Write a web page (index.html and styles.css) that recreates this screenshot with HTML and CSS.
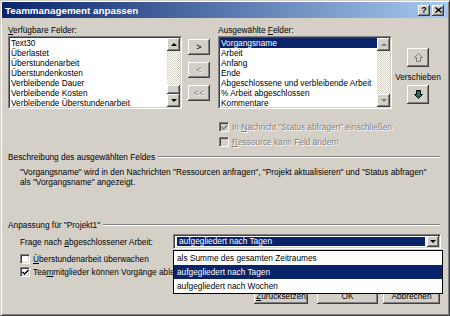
FILE: index.html
```html
<!DOCTYPE html>
<html lang="de">

<head>
  <meta charset="UTF-8">
  <title>Teammanagement anpassen</title>
  <link rel="stylesheet" href="styles.css">
</head>

<body>
  <div class="window">
    <div class="titlebar">
      <span class="title">Teammanagement anpassen</span>
      <div class="caption-buttons">
        <span class="cap-btn">?</span>
        <span class="cap-btn">
          <svg width="7" height="6" viewBox="0 0 7 6"><path d="M0.5 0.5 L6.5 5.5 M6.5 0.5 L0.5 5.5" stroke="#000" stroke-width="1.4"/></svg>
        </span>
      </div>
    </div>

    <div class="content">
      <div class="fields">
        <div class="field-col">
          <div class="label"><u>V</u>erfügbare Felder:</div>
          <div class="listbox">
            <div class="list-inner">
              <ul class="items">
                <li>Text30</li>
                <li>Überlastet</li>
                <li>Überstundenarbeit</li>
                <li>Überstundenkosten</li>
                <li>Verbleibende Dauer</li>
                <li>Verbleibende Kosten</li>
                <li>Verbleibende Überstundenarbeit</li>
              </ul>
              <div class="scrollbar">
                <span class="sb-btn"><span class="arrow up"></span></span>
                <span class="sb-track"></span>
                <span class="sb-thumb"></span>
                <span class="sb-btn"><span class="arrow down"></span></span>
              </div>
            </div>
          </div>
        </div>

        <div class="move-buttons">
          <button class="btn">&gt;</button>
          <button class="btn disabled">&lt;</button>
          <button class="btn disabled">&lt;&lt;</button>
        </div>

        <div class="field-col">
          <div class="label">Ausgewählte <u>F</u>elder:</div>
          <div class="listbox">
            <div class="list-inner">
              <ul class="items">
                <li class="selected">Vorgangsname</li>
                <li>Arbeit</li>
                <li>Anfang</li>
                <li>Ende</li>
                <li>Abgeschlossene und verbleibende Arbeit</li>
                <li>% Arbeit abgeschlossen</li>
                <li>Kommentare</li>
              </ul>
              <div class="scrollbar">
                <span class="sb-btn"><span class="arrow up off"></span></span>
                <span class="sb-track"></span>
                <span class="sb-btn"><span class="arrow down off"></span></span>
              </div>
            </div>
          </div>
          <div class="checks">
            <div class="check-row disabled">
              <span class="box checked">
                <svg width="7" height="7" viewBox="0 0 7 7"><path d="M0.5 3 L2.5 5 L6.5 1" stroke="#808080" stroke-width="1.5" fill="none"/></svg>
              </span>
              <span>In <u>N</u>achricht "Status abfragen" einschließen</span>
            </div>
            <div class="check-row disabled">
              <span class="box"></span>
              <span><u>R</u>essource kann Feld ändern</span>
            </div>
          </div>
        </div>

        <div class="order">
          <button class="btn tall">
            <svg width="9" height="9" viewBox="0 0 9 9"><path d="M4.5 0.5 L8.5 4.5 H6.5 V8.5 H2.5 V4.5 H0.5 Z" fill="none" stroke="#808080"/></svg>
          </button>
          <span class="order-label">Verschieben</span>
          <button class="btn tall">
            <svg width="9" height="9" viewBox="0 0 9 9"><path d="M2.5 0.5 H6.5 V4.5 H8.5 L4.5 8.5 L0.5 4.5 H2.5 Z" fill="#00806e" stroke="#000"/></svg>
          </button>
        </div>
      </div>

      <div class="group-title"><span>Beschreibung des ausgewählten Feldes</span></div>
      <p class="description">"Vorgangsname" wird in den Nachrichten "Ressourcen anfragen", "Projekt aktualisieren" und "Status abfragen"<br>als "Vorgangsname" angezeigt.</p>

      <div class="group-title second"><span>Anpassung für "Projekt1"</span></div>
      <div class="ask-row">
        <span class="ask-label">Frage nach <u>a</u>bgeschlossener Arbeit:</span>
        <div class="combo">
          <span class="combo-value">aufgegliedert nach Tagen</span>
          <span class="combo-btn"><span class="arrow down"></span></span>
        </div>
      </div>
      <div class="check-row option">
        <span class="box"></span>
        <span><u>Ü</u>berstundenarbeit überwachen</span>
      </div>
      <div class="check-row option next">
        <span class="box">
          <svg width="7" height="7" viewBox="0 0 7 7"><path d="M0.5 3 L2.5 5 L6.5 1" stroke="#000" stroke-width="1.5" fill="none"/></svg>
        </span>
        <span>Tea<u>m</u>mitglieder können Vorgänge ablehnen</span>
      </div>

      <div class="dialog-buttons">
        <button class="btn reset"><u>Z</u>urücksetzen</button>
        <button class="btn ok">OK</button>
        <button class="btn cancel">Abbrechen</button>
      </div>
    </div>

    <!-- open list of the combo box, drawn over the dialog -->
    <ul class="dropdown">
      <li>als Summe des gesamten Zeitraumes</li>
      <li class="selected">aufgegliedert nach Tagen</li>
      <li>aufgegliedert nach Wochen</li>
    </ul>
  </div>
</body>

</html>
```

FILE: styles.css
```css
body {
  margin: 0;
  font-family: "Liberation Sans", Arial, sans-serif;
  font-size: 8.3px;
  color: #000;
}

.window {
  position: relative;
  width: 450px;
  height: 316px;
  box-sizing: border-box;
  background: #d4d0c8;
  border: 1px solid;
  border-color: #d4d0c8 #404040 #404040 #d4d0c8;
  box-shadow: inset 1px 1px #fff, inset -1px -1px #808080;
  padding: 1px;
}

.titlebar {
  height: 16px;
  display: flex;
  align-items: center;
  padding: 0 4px 0 3px;
  background: linear-gradient(to right, #0a246a, #a6caf0);
  color: #fff;
  font-weight: bold;
  font-size: 9.8px;
}

.title {
  flex: 1;
}

.caption-buttons {
  display: flex;
  gap: 2px;
}

.cap-btn {
  width: 12px;
  height: 11px;
  display: flex;
  justify-content: center;
  align-items: center;
  background: #d4d0c8;
  color: #000;
  font-size: 9px;
  box-shadow: inset -1px -1px #404040, inset 1px 1px #fff, inset -2px -2px #808080;
}

.content {
  padding: 7px 7px 0 6px;
}

.fields {
  display: flex;
  height: 122px;
}

.field-col {
  width: 174px;
}

.label {
  height: 10px;
  line-height: 10px;
  margin-bottom: 1px;
}

.listbox {
  height: 73px;
  box-sizing: border-box;
  border: 1px solid;
  border-color: #808080 #fff #fff #808080;
}

.list-inner {
  height: 100%;
  box-sizing: border-box;
  border: 1px solid;
  border-color: #404040 #d4d0c8 #d4d0c8 #404040;
  background: #fff;
  display: flex;
  overflow: hidden;
}

.items {
  flex: 1;
  list-style: none;
  margin: 0;
  padding: 0;
  line-height: 10px;
  white-space: nowrap;
  overflow: hidden;
}

.items li {
  padding-left: 1px;
}

.items .selected,
.dropdown .selected {
  background: #0a246a;
  color: #fff;
}

.scrollbar {
  width: 13px;
  display: flex;
  flex-direction: column;
}

.sb-btn,
.sb-thumb,
.combo-btn,
.btn {
  background: #d4d0c8;
  box-shadow: inset -1px -1px #404040, inset 1px 1px #fff, inset -2px -2px #808080;
}

.sb-btn {
  height: 13px;
  display: flex;
  justify-content: center;
  align-items: center;
}

.sb-track {
  flex: 1;
  background: repeating-conic-gradient(#fff 0 25%, #d4d0c8 0 50%) 0 0 / 2px 2px;
}

.sb-thumb {
  height: 9px;
}

.arrow {
  width: 0;
  height: 0;
  border-left: 3px solid transparent;
  border-right: 3px solid transparent;
}

.arrow.up {
  border-bottom: 3px solid #000;
}

.arrow.down {
  border-top: 3px solid #000;
}

.arrow.up.off {
  border-bottom-color: #808080;
}

.arrow.down.off {
  border-top-color: #808080;
}

.btn {
  border: 0;
  padding: 0;
  margin: 0;
  font: inherit;
  color: #000;
  display: flex;
  justify-content: center;
  align-items: center;
}

.btn.disabled {
  color: #808080;
  text-shadow: 1px 1px #fff;
}

.move-buttons {
  width: 22px;
  margin: 0 8px 0 6px;
  padding-top: 14px;
  display: flex;
  flex-direction: column;
  gap: 7px;
}

.move-buttons .btn {
  height: 16px;
  font-size: 9px;
}

.order {
  width: 46px;
  margin-left: 3px;
  padding-top: 23px;
  display: flex;
  flex-direction: column;
  align-items: center;
}

.btn.tall {
  width: 22px;
  height: 19px;
}

.order-label {
  margin: 5px 0 3px;
  line-height: 10px;
  white-space: nowrap;
}

.checks {
  margin-top: 13px;
}

.check-row {
  display: flex;
  align-items: center;
  gap: 3px;
  height: 10px;
  white-space: nowrap;
}

.checks .check-row {
  margin-left: 1px;
}

.checks .check-row + .check-row {
  margin-top: 5px;
}

.check-row.disabled {
  color: #808080;
  text-shadow: 1px 1px #fff;
}

.box {
  width: 10px;
  height: 10px;
  flex: none;
  box-sizing: border-box;
  border: 1px solid;
  border-color: #808080 #fff #fff #808080;
  background: #fff;
  box-shadow: inset 1px 1px #404040, inset -1px -1px #d4d0c8;
  display: flex;
  justify-content: center;
  align-items: center;
}

.check-row.disabled .box {
  background: #d4d0c8;
}

.group-title {
  margin: 5px 1px 0 0;
  display: flex;
  align-items: center;
  height: 10px;
  line-height: 10px;
}

.group-title::after {
  content: "";
  flex: 1;
  margin-left: 3px;
  border-top: 1px solid #808080;
  border-bottom: 1px solid #fff;
}

.group-title.second {
  margin-top: 33px;
}

.description {
  margin: 5px 0 0 12px;
  line-height: 10px;
  white-space: nowrap;
}

.ask-row {
  margin-top: 4px;
  display: flex;
  align-items: center;
  height: 15px;
}

.ask-label {
  width: 153px;
  padding-left: 12px;
}

.combo {
  width: 268px;
  height: 15px;
  box-sizing: border-box;
  border: 1px solid;
  border-color: #808080 #fff #fff #808080;
  box-shadow: inset 1px 1px #404040, inset -1px -1px #d4d0c8;
  background: #fff;
  display: flex;
  padding: 2px 1px 2px 3px;
  gap: 2px;
}

.combo-value {
  flex: 1;
  background: #0a246a;
  color: #fff;
  line-height: 9px;
  padding-left: 2px;
}

.combo-btn {
  width: 12px;
  margin: -1px 0;
  display: flex;
  justify-content: center;
  align-items: center;
}

.check-row.option {
  margin-top: 5px;
  padding-left: 12px;
}

.check-row.option.next {
  margin-top: 3px;
}

.dialog-buttons {
  margin: 10px 1px 0 0;
  display: flex;
  justify-content: flex-end;
}

.dialog-buttons .btn {
  height: 17px;
}

.btn.reset {
  width: 54px;
}

.btn.ok {
  width: 61px;
  margin-left: 9px;
}

.btn.cancel {
  width: 57px;
  margin-left: 5px;
}

.dropdown {
  position: absolute;
  left: 172px;
  top: 249px;
  width: 270px;
  height: 44px;
  box-sizing: border-box;
  margin: 0;
  padding: 0;
  list-style: none;
  border: 1px solid #000;
  background: #fff;
}

.dropdown li {
  height: 14px;
  line-height: 14px;
  padding-left: 3px;
}
```
